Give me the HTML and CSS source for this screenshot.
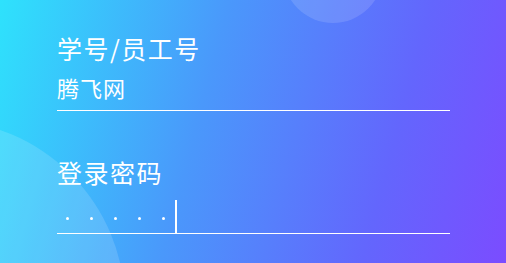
FILE: index.html
```html
<!DOCTYPE html>
<html lang="zh-CN">
<head>
<meta charset="utf-8">
<title>登录</title>
<link rel="stylesheet" href="styles.css">
</head>
<body>
<div class="screen">
  <div class="bubble bubble-top"></div>
  <div class="bubble bubble-left"></div>
  <form class="form">
    <div class="field">
      <div class="label">学号/员工号</div>
      <div class="input">腾飞网</div>
    </div>
    <div class="field field-pass">
      <div class="label">登录密码</div>
      <div class="input input-pass">
        <span class="dot"></span><span class="dot"></span><span class="dot"></span><span class="dot"></span><span class="dot"></span>
        <span class="caret"></span>
      </div>
    </div>
  </form>
</div>
</body>
</html>
```
FILE: styles.css
```css
html, body {
  margin: 0;
  padding: 0;
}
body {
  font-family: "Noto Sans CJK SC", "Noto Sans", sans-serif;
  color: #fff;
}
.screen {
  position: relative;
  width: 506px;
  height: 263px;
  overflow: hidden;
  background: linear-gradient(105deg, #2ee2fc 0%, #4a98fb 40%, #6366fd 75%, #7b4cff 100%);
}
.bubble {
  position: absolute;
  border-radius: 50%;
  background: rgba(255, 255, 255, 0.13);
}
.bubble-top {
  left: 283px;
  top: -77px;
  width: 100px;
  height: 100px;
}
.bubble-left {
  left: -245px;
  top: 120px;
  width: 370px;
  height: 370px;
  background: rgba(255, 255, 255, 0.14);
}
.form {
  position: relative;
  width: 393px;
  margin: 0 0 0 57px;
  padding-top: 33px;
  display: flex;
  flex-direction: column;
  gap: 46px;
}
.field {
  display: flex;
  flex-direction: column;
}
.label {
  font-size: 25px;
  line-height: 30px;
  letter-spacing: 1.5px;
}
.input {
  margin-top: 10px;
  font-size: 22px;
  line-height: 28px;
  letter-spacing: 1px;
  border-bottom: 1px solid #fff;
  padding-bottom: 9px;
}
.input-pass {
  height: 33px;
  margin-top: 13px;
  padding-bottom: 0;
  display: flex;
  align-items: center;
  gap: 21px;
  padding-left: 9px;
}
.dot {
  width: 3px;
  height: 3px;
  border-radius: 50%;
  background: #fff;
  margin-top: 4px;
}
.caret {
  width: 1.5px;
  height: 33px;
  background: #fff;
  margin-left: -11px;
  align-self: flex-start;
}
```
